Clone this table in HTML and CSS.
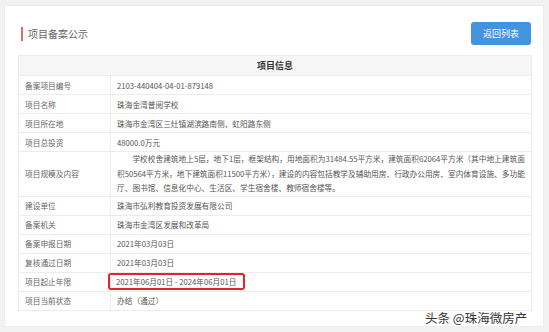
FILE: index.html
```html
<!DOCTYPE html>
<html lang="zh">
<head>
<meta charset="utf-8">
<link rel="stylesheet" href="styles.css">
</head>
<body>
<div class="page">
  <div class="card">
    <div class="head">
      <h1 class="title">项目备案公示</h1>
      <button class="btn">返回列表</button>
    </div>
    <table class="info">
      <colgroup><col class="ck"><col></colgroup>
      <thead>
        <tr><th colspan="2">项目信息</th></tr>
      </thead>
      <tbody>
        <tr><td class="k">备案项目编号</td><td class="v">2103-440404-04-01-879148</td></tr>
        <tr><td class="k">项目名称</td><td class="v">珠海金湾普阅学校</td></tr>
        <tr><td class="k">项目所在地</td><td class="v">珠海市金湾区三灶镇湖滨路南侧、虹阳路东侧</td></tr>
        <tr><td class="k">项目总投资</td><td class="v">48000.0万元</td></tr>
        <tr class="tall"><td class="k">项目规模及内容</td><td class="v"><p class="para">学校校舍建筑地上5层，地下1层，框架结构，用地面积为31484.55平方米，建筑面积62064平方米（其中地上建筑面积50564平方米，地下建筑面积11500平方米），建设的内容包括教学及辅助用房、行政办公用房、室内体育设施、多功能厅、图书馆、信息化中心、生活区、学生宿舍楼、教师宿舍楼等。</p></td></tr>
        <tr><td class="k">建设单位</td><td class="v">珠海市弘利教育投资发展有限公司</td></tr>
        <tr><td class="k">备案机关</td><td class="v">珠海市金湾区发展和改革局</td></tr>
        <tr><td class="k">备案申报日期</td><td class="v">2021年03月03日</td></tr>
        <tr><td class="k">复核通过日期</td><td class="v">2021年03月03日</td></tr>
        <tr><td class="k">项目起止年限</td><td class="v"><span class="mark">2021年06月01日 - 2024年06月01日</span></td></tr>
        <tr><td class="k">项目当前状态</td><td class="v">办结（通过）</td></tr>
      </tbody>
    </table>
    <div class="watermark">头条 @珠海微房产</div>
  </div>
</div>
</body>
</html>
```
FILE: styles.css
```css
html, body {
  margin: 0;
  padding: 0;
}
body {
  background: #f2f2f2;
  font-family: "Noto Sans CJK SC", "Microsoft YaHei", sans-serif;
  color: #555;
}
.page {
  padding: 5px 5px 0 4px;
}
.card {
  position: relative;
  background: #fff;
  border: 1px solid #ececec;
  height: 322px;
  box-sizing: border-box;
  padding: 16px 11px 0 13px;
  overflow: hidden;
}
.head {
  display: flex;
  align-items: center;
  justify-content: space-between;
  height: 23px;
  padding-right: 1px;
}
.title {
  margin: 0 0 0 3px;
  padding-left: 5px;
  border-left: 2.5px solid #e46a6a;
  font-size: 10px;
  line-height: 14px;
  font-weight: normal;
  color: #666;
}
.btn {
  width: 60px;
  height: 23px;
  border: 0;
  border-radius: 3px;
  background: #4394df;
  color: #fff;
  font-family: inherit;
  font-size: 9px;
  padding: 0;
}
.info {
  margin-top: 10px;
  width: 100%;
  border-collapse: collapse;
  font-size: 7.7px;
  table-layout: fixed;
}
.ck {
  width: 92px;
}
.info th {
  height: 20px;
  box-sizing: border-box;
  padding: 0;
  background: #f6f6f6;
  border: 1px solid #ececec;
  font-size: 9px;
  color: #333;
  font-weight: bold;
  line-height: 16px;
}
.info td {
  height: 19px;
  box-sizing: border-box;
  border: 1px solid #ececec;
  padding: 0 6px;
  line-height: 11px;
  vertical-align: middle;
}
.info td.k {
  color: #666;
}
.info td.v {
  color: #555;
}
.info tr.tall td {
  height: 44px;
}
.para {
  margin: 0;
  text-indent: 2em;
  line-height: 14.5px;
}
.mark {
  display: inline-block;
  margin-left: -9px;
  padding: 1px 6px;
  border: 2px solid #e0262a;
  border-radius: 3px;
  line-height: 11px;
}
.watermark {
  position: absolute;
  left: 420px;
  top: 302px;
  font-size: 12.5px;
  color: #333;
  text-shadow: 0 0 2px #fff, 0 0 2px #fff, 0 0 1px #fff;
}
```
